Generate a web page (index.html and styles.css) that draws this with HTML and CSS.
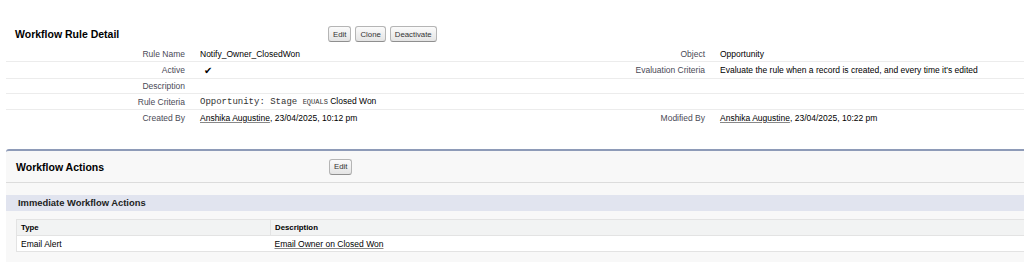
FILE: index.html
```html
<!DOCTYPE html>
<html lang="en">
<head>
  <meta charset="UTF-8">
  <title>Workflow Rule: Notify_Owner_ClosedWon</title>
  <link rel="stylesheet" href="styles.css">
</head>
<body>

  <div class="detailBlock">
    <div class="pbHeader">
      <h2 class="pbTitle">Workflow Rule Detail</h2>
      <div class="pbButtons">
        <button class="btn">Edit</button>
        <button class="btn">Clone</button>
        <button class="btn">Deactivate</button>
      </div>
    </div>

    <div class="detailList">
      <div class="row">
        <span class="labelCol">Rule Name</span>
        <span class="dataCol">Notify_Owner_ClosedWon</span>
        <span class="labelCol">Object</span>
        <span class="dataCol">Opportunity</span>
      </div>
      <div class="row tall">
        <span class="labelCol">Active</span>
        <span class="dataCol"><span class="check">&#10004;</span></span>
        <span class="labelCol">Evaluation Criteria</span>
        <span class="dataCol">Evaluate the rule when a record is created, and every time it's edited</span>
      </div>
      <div class="row short">
        <span class="labelCol">Description</span>
        <span class="dataCol"></span>
        <span class="labelCol"></span>
        <span class="dataCol"></span>
      </div>
      <div class="row">
        <span class="labelCol">Rule Criteria</span>
        <span class="dataCol"><span class="code">Opportunity: Stage <span class="op">EQUALS</span></span> Closed Won</span>
        <span class="labelCol"></span>
        <span class="dataCol"></span>
      </div>
      <div class="row last">
        <span class="labelCol">Created By</span>
        <span class="dataCol"><a href="#">Anshika Augustine</a>, 23/04/2025, 10:12 pm</span>
        <span class="labelCol">Modified By</span>
        <span class="dataCol"><a href="#">Anshika Augustine</a>, 23/04/2025, 10:22 pm</span>
      </div>
    </div>
  </div>

  <div class="actionsBlock">
    <div class="pbHeader boxed">
      <h2 class="pbTitle">Workflow Actions</h2>
      <div class="pbButtons">
        <button class="btn">Edit</button>
      </div>
    </div>

    <div class="pbBody">
      <h3 class="subHeader">Immediate Workflow Actions</h3>
      <table class="list">
        <tr class="headerRow">
          <th class="colType">Type</th>
          <th>Description</th>
        </tr>
        <tr>
          <td>Email Alert</td>
          <td><a href="#">Email Owner on Closed Won</a></td>
        </tr>
      </table>
    </div>
  </div>

</body>
</html>
```

FILE: styles.css
```css
body {
  margin: 0;
  padding: 22px 0 0 6px;
  font-family: "Liberation Sans", Arial, sans-serif;
  font-size: 8.5px;
  color: #000;
  background: #fff;
}
a {
  color: #000;
  text-decoration: underline;
  text-decoration-color: #888;
}
/* Block header with title and buttons */
.pbHeader {
  display: flex;
  align-items: center;
  height: 24px;
}
.pbTitle {
  width: 313px;
  margin: 0;
  padding-left: 9px;
  font-size: 10.5px;
  font-weight: bold;
}
.pbButtons {
  display: flex;
  gap: 4px;
}
.btn {
  font-family: "Liberation Sans", Arial, sans-serif;
  font-size: 7.8px;
  color: #333;
  height: 16px;
  padding: 0 4px;
  border: 1px solid #b5b5b5;
  border-bottom-color: #8f8f8f;
  border-radius: 3px;
  background: linear-gradient(#fbfbfb, #e4e4e4);
}
/* Detail list */
.detailList .row {
  display: grid;
  grid-template-columns: 184px 320px 200px 1fr;
  height: 15px;
  align-items: center;
  border-bottom: 1px solid #ececec;
}
.detailList .row.tall {
  height: 16px;
}
.detailList .row.short {
  height: 14px;
}
.detailList .row.last {
  border-bottom: none;
}
.labelCol {
  text-align: right;
  padding-right: 5px;
  font-size: 8.5px;
  color: #4a4a56;
}
.dataCol {
  padding-left: 10px;
  white-space: nowrap;
}
.check {
  font-size: 10px;
  padding-left: 4px;
}
.code {
  font-family: "Liberation Mono", "Courier New", monospace;
  font-size: 9px;
  color: #333;
}
.op {
  font-size: 7px;
}
/* Workflow actions block */
.actionsBlock {
  margin-top: 24px;
  background: #f8f8f8;
  border-top: 2px solid #8e9bb8;
  border-radius: 3px 0 0 0;
}
.pbHeader.boxed {
  height: 31px;
  border-bottom: 1px solid #dcdcdc;
}
.pbHeader.boxed .pbTitle {
  padding-left: 10px;
}
.pbBody {
  padding: 12px 0;
}
.subHeader {
  margin: 0;
  height: 16px;
  line-height: 16px;
  padding-left: 12px;
  background: #e1e4ef;
  font-size: 9.4px;
  font-weight: bold;
  color: #222;
}
.list {
  margin: 8px 0 0 10px;
  width: calc(100% - 10px);
  border-collapse: collapse;
  background: #fff;
}
.list th, .list td {
  height: 15px;
  padding: 0 4px;
  text-align: left;
  border-bottom: 1px solid #e3e3e3;
}
.list th {
  background: #f2f3f3;
  font-size: 7.8px;
  font-weight: bold;
  color: #000;
  border-top: 1px solid #e3e3e3;
}
.list .colType {
  width: 245px;
  border-right: 1px solid #e3e3e3;
}
.list tr:first-child th:first-child,
.list td:first-child {
  border-left: 1px solid #e3e3e3;
}
```
